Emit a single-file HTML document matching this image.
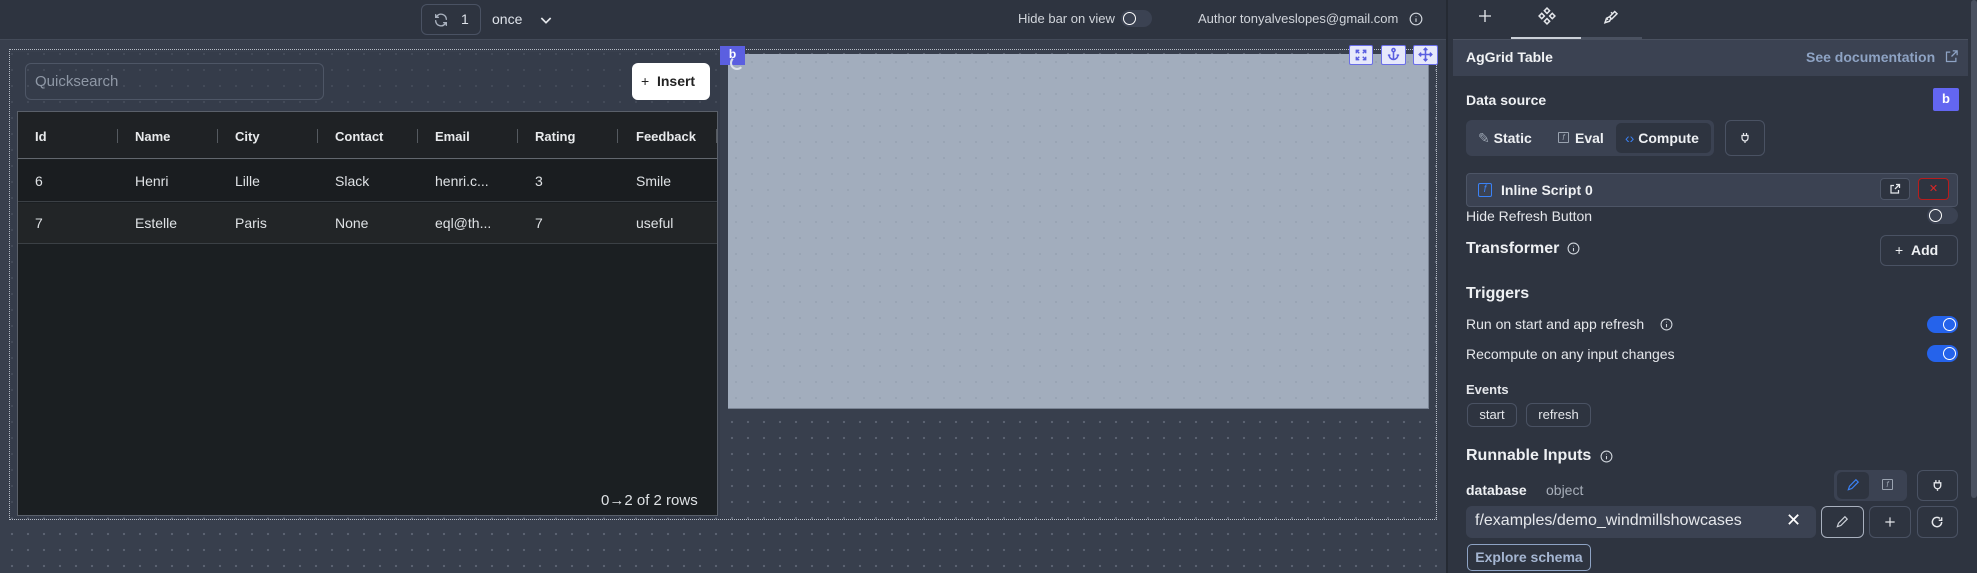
<!DOCTYPE html>
<html><head><meta charset="utf-8"><style>
*{box-sizing:border-box;margin:0;padding:0}
body{width:1977px;height:573px;overflow:hidden;background:#363d4b;font-family:"Liberation Sans",sans-serif;position:relative;color:#e5e7eb}
.a{position:absolute}
.canvas{left:0;top:40px;width:1446px;height:533px;background-color:#383f4d;background-image:radial-gradient(circle,#5c6372 1px,transparent 1.3px);background-size:16px 16px;background-position:4px 6px}
.top{left:0;top:0;width:1446px;height:40px;background:#2e3440;border-bottom:1px solid #434a58}
.panel{left:1446px;top:0;width:531px;height:573px;background:#2e3440;border-left:2px solid #252a33}
.t{font-size:14px;white-space:nowrap}
.btn{border:1px solid #4a5263;border-radius:6px}
.tog{width:31px;height:17px;border-radius:9px;background:#3b4252}
.tog::after{content:"";position:absolute;left:2px;top:2px;width:11px;height:11px;border:1.5px solid #fff;border-radius:50%}
.on{background:#2563eb}
.on::after{left:16px}
.hd{font-weight:bold;font-size:13px;color:#e8eaec}
.cell{font-size:14px;color:#dfe2e5}
.sep{width:1px;height:14px;background:#555a60;top:129px}
</style></head><body>
<div class="a canvas"></div>
<div class="a top"></div>
<!-- top bar -->
<div class="a btn" style="left:421px;top:4px;width:60px;height:31px;border-color:#4a5263"></div>
<svg class="a" style="left:433px;top:12px" width="16" height="16" viewBox="0 0 24 24" fill="none" stroke="#aab2bf" stroke-width="2" stroke-linecap="round"><path d="M20 11a8 8 0 0 0-14-5l-2 2M4 4v4h4M4 13a8 8 0 0 0 14 5l2-2M20 20v-4h-4"/></svg>
<div class="a t" style="left:461px;top:11px;color:#dfe3ea">1</div>
<div class="a t" style="left:492px;top:11px;color:#dfe3ea">once</div>
<svg class="a" style="left:538px;top:12px" width="16" height="16" viewBox="0 0 24 24" fill="none" stroke="#e5e7eb" stroke-width="2.5"><path d="M5 9l7 7 7-7"/></svg>
<div class="a t" style="left:1018px;top:11px;font-size:13px;color:#d1d5db">Hide bar on view</div>
<div class="a tog" style="left:1121px;top:10px;background:#3b4252"></div>
<div class="a t" style="left:1198px;top:11px;font-size:13px;color:#d1d5db">Author tonyalveslopes@gmail.com</div>
<svg class="a" style="left:1409px;top:12px" width="14" height="14" viewBox="0 0 24 24" fill="none" stroke="#cfd4db" stroke-width="2"><circle cx="12" cy="12" r="10"/><path d="M12 11v6M12 7v1"/></svg>
<!-- frame -->
<div class="a" style="left:9px;top:49px;width:1428px;height:471px;border:1px dotted #b8bec8"></div>
<div class="a" style="left:10px;top:52px;width:710px;height:466px;background:rgba(52,59,73,.6)"></div>
<div class="a" style="left:25px;top:63px;width:299px;height:37px;border:1px solid #4e5666;border-radius:6px"></div>
<div class="a t" style="left:35px;top:73px;font-size:15px;color:#8f98a6">Quicksearch</div>
<div class="a" style="left:632px;top:63px;width:78px;height:37px;background:#fff;border-radius:6px"></div>
<div class="a t" style="left:641px;top:73px;font-size:14px;color:#222">+&nbsp;&nbsp;<b>Insert</b></div>
<!-- table -->
<div class="a" style="left:17px;top:111px;width:701px;height:405px;background:#1b1f22;border:1px solid #5a606a"></div>
<div class="a" style="left:18px;top:112px;width:699px;height:47px;background:#1f2225;border-bottom:1px solid #62676e"></div>
<div class="a" style="left:18px;top:160px;width:699px;height:42px;background:#1a1d20;border-bottom:1px solid #3b4045"></div>
<div class="a" style="left:18px;top:203px;width:699px;height:41px;background:#222527;border-bottom:1px solid #3b4045"></div>
<div class="a hd" style="left:35px;top:129px">Id</div>
<div class="a hd" style="left:135px;top:129px">Name</div>
<div class="a hd" style="left:235px;top:129px">City</div>
<div class="a hd" style="left:335px;top:129px">Contact</div>
<div class="a hd" style="left:435px;top:129px">Email</div>
<div class="a hd" style="left:535px;top:129px">Rating</div>
<div class="a hd" style="left:636px;top:129px">Feedback</div>
<div class="a sep" style="left:117px"></div><div class="a sep" style="left:217px"></div><div class="a sep" style="left:317px"></div><div class="a sep" style="left:417px"></div><div class="a sep" style="left:517px"></div><div class="a sep" style="left:617px"></div><div class="a sep" style="left:716px"></div>
<div class="a cell" style="left:35px;top:173px">6</div><div class="a cell" style="left:135px;top:173px">Henri</div><div class="a cell" style="left:235px;top:173px">Lille</div><div class="a cell" style="left:335px;top:173px">Slack</div><div class="a cell" style="left:435px;top:173px">henri.c...</div><div class="a cell" style="left:535px;top:173px">3</div><div class="a cell" style="left:636px;top:173px">Smile</div>
<div class="a cell" style="left:35px;top:215px">7</div><div class="a cell" style="left:135px;top:215px">Estelle</div><div class="a cell" style="left:235px;top:215px">Paris</div><div class="a cell" style="left:335px;top:215px">None</div><div class="a cell" style="left:435px;top:215px">eql@th...</div><div class="a cell" style="left:535px;top:215px">7</div><div class="a cell" style="left:636px;top:215px">useful</div>
<div class="a t" style="left:601px;top:492px;font-size:15px;color:#dfe2e5">0→2 of 2 rows</div>
<!-- gray box -->
<div class="a" style="left:728px;top:54px;width:701px;height:355px;background-color:#a2adbd;background-image:radial-gradient(circle,#98a3b3 1px,transparent 1.3px);background-size:16px 16px;border-right:1px solid #7a8494;border-bottom:1px solid #7a8494"></div>
<div class="a" style="left:720px;top:46px;width:25px;height:19px;background:#5b5fe0;color:#fff;font-size:12px;font-weight:bold;text-align:center;line-height:17px">b</div>
<div class="a" style="left:730px;top:56px;width:14px;height:14px;border:2px solid #dde3ea;border-radius:50%;border-top-color:transparent;border-right-color:transparent"></div>
<div class="a" style="left:1349px;top:45px;width:24px;height:20px;background:#e6e8fb;border:1px solid #6a6ee8;border-radius:2px"></div>
<div class="a" style="left:1381px;top:45px;width:25px;height:20px;background:#e6e8fb;border:1px solid #6a6ee8;border-radius:2px"></div>
<div class="a" style="left:1413px;top:45px;width:25px;height:20px;background:#e6e8fb;border:1px solid #6a6ee8;border-radius:2px"></div>
<svg class="a" style="left:1354px;top:48px" width="14" height="14" viewBox="0 0 24 24" fill="none" stroke="#5a5ee0" stroke-width="2.5"><path d="M4 9V4h5M20 9V4h-5M4 15v5h5M20 15v5h-5M4 4l5 5M20 4l-5 5M4 20l5-5M20 20l-5-5"/></svg>
<svg class="a" style="left:1386px;top:47px" width="15" height="15" viewBox="0 0 24 24" fill="none" stroke="#5a5ee0" stroke-width="2.5"><circle cx="12" cy="5" r="2.5"/><path d="M12 8v13M5 13a7 7 0 0 0 14 0M3 13h4M17 13h4"/></svg>
<svg class="a" style="left:1418px;top:47px" width="15" height="15" viewBox="0 0 24 24" fill="none" stroke="#5a5ee0" stroke-width="2.5"><path d="M12 2v20M2 12h20M9 5l3-3 3 3M9 19l3 3 3-3M5 9l-3 3 3 3M19 9l3 3-3 3"/></svg>
<!-- panel -->
<div class="a panel"></div>
<svg class="a" style="left:1477px;top:8px" width="16" height="16" viewBox="0 0 24 24" fill="none" stroke="#e5e7eb" stroke-width="2"><path d="M12 3v18M3 12h18"/></svg>
<svg class="a" style="left:1538px;top:7px" width="18" height="18" viewBox="0 0 24 24" fill="none" stroke="#e5e7eb" stroke-width="2"><rect x="9.5" y="2.5" width="5" height="5" transform="rotate(45 12 5)"/><rect x="9.5" y="16.5" width="5" height="5" transform="rotate(45 12 19)"/><rect x="2.5" y="9.5" width="5" height="5" transform="rotate(45 5 12)"/><rect x="16.5" y="9.5" width="5" height="5" transform="rotate(45 19 12)"/></svg>
<svg class="a" style="left:1602px;top:7px" width="18" height="18" viewBox="0 0 24 24" fill="none" stroke="#e5e7eb" stroke-width="2"><path d="M10 13l7-7 3 3-7 7zM10 13l-4 2-2 6 6-2 2-4M14 9l-2-2M8 17l-2-2"/></svg>
<div class="a" style="left:1511px;top:37px;width:70px;height:2px;background:#cbd0d8"></div>
<div class="a" style="left:1581px;top:37px;width:61px;height:2px;background:#4a5160"></div>
<div class="a" style="left:1453px;top:39px;width:515px;height:37px;background:#3b4252;border-top:1px solid #4a5160"></div>
<div class="a t" style="left:1466px;top:49px;font-weight:bold;font-size:14px;color:#f1f3f5">AgGrid Table</div>
<div class="a t" style="left:1806px;top:49px;font-weight:bold;font-size:14px;color:#8ea3c4">See documentation</div>
<svg class="a" style="left:1944px;top:49px" width="15" height="15" viewBox="0 0 24 24" fill="none" stroke="#8ea3c4" stroke-width="2"><path d="M14 3h7v7M21 3l-9 9M19 14v6H4V5h6"/></svg>
<div class="a t" style="left:1466px;top:92px;font-weight:bold;color:#eef0f3">Data source</div>
<div class="a" style="left:1933px;top:88px;width:26px;height:23px;background:#6366f1;border-radius:2px;color:#fff;font-weight:bold;font-size:13px;text-align:center;line-height:22px">b</div>
<div class="a" style="left:1466px;top:120px;width:248px;height:36px;background:#3b4252;border-radius:6px"></div>
<div class="a" style="left:1616px;top:123px;width:95px;height:30px;background:#2e3440;border-radius:5px"></div>
<div class="a t" style="left:1478px;top:130px;color:#eef0f3"><span style="color:#9aa3b0">✎</span> <b>Static</b></div>
<div class="a" style="left:1558px;top:132px;width:11px;height:11px;border:1px solid #9aa3b0;border-radius:1px;font-size:8px;color:#9aa3b0;text-align:center;line-height:10px;font-style:italic">f</div>
<div class="a t" style="left:1575px;top:130px;font-weight:bold;color:#eef0f3">Eval</div>
<div class="a t" style="left:1625px;top:130px;color:#eef0f3"><span style="color:#3b82f6">‹›</span> <b>Compute</b></div>
<div class="a btn" style="left:1725px;top:120px;width:40px;height:36px"></div>
<svg class="a" style="left:1739px;top:132px" width="12" height="12" viewBox="0 0 24 24" fill="none" stroke="#e5e7eb" stroke-width="2.5"><path d="M9 2v5M15 2v5M6 7h12v5a6 6 0 0 1-12 0zM12 18v4"/></svg>
<div class="a" style="left:1466px;top:173px;width:492px;height:34px;background:#3b4252;border:1px solid #4d5566;border-radius:4px"></div>
<div class="a" style="left:1478px;top:183px;width:14px;height:14px;border:1.5px solid #3b82f6;border-radius:2px;color:#3b82f6;font-size:10px;text-align:center;line-height:11px;font-style:italic">f</div>
<div class="a t" style="left:1501px;top:182px;font-weight:bold;color:#eef0f3">Inline Script 0</div>
<div class="a" style="left:1880px;top:178px;width:30px;height:22px;background:#2e3440;border:1px solid #4d5566;border-radius:4px"></div>
<svg class="a" style="left:1889px;top:183px" width="12" height="12" viewBox="0 0 24 24" fill="none" stroke="#e5e7eb" stroke-width="2.5"><path d="M14 3h7v7M21 3l-9 9M19 14v6H4V5h6"/></svg>
<div class="a" style="left:1918px;top:178px;width:31px;height:22px;background:#2e3440;border:1px solid #b91c1c;border-radius:4px;color:#dc2626;font-size:11px;text-align:center;line-height:20px">✕</div>
<div class="a t" style="left:1466px;top:208px;color:#e5e7eb">Hide Refresh Button</div>
<div class="a tog" style="left:1927px;top:207px"></div>
<div class="a t" style="left:1466px;top:240px;font-weight:bold;font-size:16px;color:#eef0f3">Transformer</div>
<svg class="a" style="left:1567px;top:242px" width="13" height="13" viewBox="0 0 24 24" fill="none" stroke="#cfd4db" stroke-width="2"><circle cx="12" cy="12" r="10"/><path d="M12 11v6M12 7v1"/></svg>
<div class="a btn" style="left:1880px;top:235px;width:78px;height:31px"></div>
<div class="a t" style="left:1895px;top:242px;color:#eef0f3">+&nbsp;&nbsp;<b>Add</b></div>
<div class="a t" style="left:1466px;top:285px;font-weight:bold;font-size:16px;color:#eef0f3">Triggers</div>
<div class="a t" style="left:1466px;top:316px;color:#e5e7eb">Run on start and app refresh</div>
<svg class="a" style="left:1660px;top:318px" width="13" height="13" viewBox="0 0 24 24" fill="none" stroke="#cfd4db" stroke-width="2"><circle cx="12" cy="12" r="10"/><path d="M12 11v6M12 7v1"/></svg>
<div class="a tog on" style="left:1927px;top:316px"></div>
<div class="a t" style="left:1466px;top:346px;color:#e5e7eb">Recompute on any input changes</div>
<div class="a tog on" style="left:1927px;top:345px"></div>
<div class="a t" style="left:1466px;top:382px;font-weight:bold;font-size:13px;color:#e5e7eb">Events</div>
<div class="a btn" style="left:1467px;top:403px;width:50px;height:24px;font-size:13px;color:#e5e7eb;text-align:center;line-height:22px">start</div>
<div class="a btn" style="left:1526px;top:403px;width:65px;height:24px;font-size:13px;color:#e5e7eb;text-align:center;line-height:22px">refresh</div>
<div class="a t" style="left:1466px;top:447px;font-weight:bold;font-size:16px;color:#eef0f3">Runnable Inputs</div>
<svg class="a" style="left:1600px;top:450px" width="13" height="13" viewBox="0 0 24 24" fill="none" stroke="#cfd4db" stroke-width="2"><circle cx="12" cy="12" r="10"/><path d="M12 11v6M12 7v1"/></svg>
<div class="a t" style="left:1466px;top:482px;font-weight:bold;color:#eef0f3">database</div>
<div class="a t" style="left:1546px;top:482px;color:#a8afba">object</div>
<div class="a" style="left:1834px;top:470px;width:73px;height:31px;background:#3b4252;border-radius:6px"></div>
<div class="a" style="left:1837px;top:472px;width:32px;height:27px;background:#2e3440;border-radius:5px"></div>
<svg class="a" style="left:1846px;top:478px" width="14" height="14" viewBox="0 0 24 24" fill="none" stroke="#3b82f6" stroke-width="2"><path d="M4 20l2-6L17 3l4 4L10 18z"/></svg>
<div class="a" style="left:1882px;top:479px;width:11px;height:11px;border:1px solid #9aa3b0;border-radius:1px;font-size:8px;color:#9aa3b0;text-align:center;line-height:10px;font-style:italic">f</div>
<div class="a btn" style="left:1917px;top:470px;width:41px;height:31px"></div>
<svg class="a" style="left:1931px;top:479px" width="13" height="13" viewBox="0 0 24 24" fill="none" stroke="#e5e7eb" stroke-width="2.5"><path d="M9 2v5M15 2v5M6 7h12v5a6 6 0 0 1-12 0zM12 18v4"/></svg>
<div class="a" style="left:1466px;top:506px;width:350px;height:32px;background:#3b4252;border-radius:6px"></div>
<div class="a t" style="left:1475px;top:512px;font-size:16px;color:#e5e7eb">f/examples/demo_windmillshowcases</div>
<div class="a t" style="left:1786px;top:510px;font-size:18px;color:#fff">✕</div>
<div class="a btn" style="left:1821px;top:506px;width:43px;height:32px;border-color:#a9b1bf"></div>
<svg class="a" style="left:1835px;top:515px" width="14" height="14" viewBox="0 0 24 24" fill="none" stroke="#cfd4db" stroke-width="2"><path d="M4 20l2-6L17 3l4 4L10 18z"/></svg>
<div class="a btn" style="left:1869px;top:506px;width:42px;height:32px"></div>
<svg class="a" style="left:1883px;top:515px" width="14" height="14" viewBox="0 0 24 24" fill="none" stroke="#e5e7eb" stroke-width="2"><path d="M12 4v16M4 12h16"/></svg>
<div class="a btn" style="left:1917px;top:506px;width:41px;height:32px"></div>
<svg class="a" style="left:1930px;top:515px" width="14" height="14" viewBox="0 0 24 24" fill="none" stroke="#e5e7eb" stroke-width="2.5"><path d="M20 12a8 8 0 1 1-3-6.2M20 4v5h-5"/></svg>
<div class="a" style="left:1467px;top:544px;width:124px;height:27px;border:1px solid #8ea3c4;border-radius:5px;color:#a5b6d2;font-weight:bold;font-size:14px;text-align:center;line-height:25px">Explore schema</div>
<div class="a" style="left:1971px;top:0;width:6px;height:498px;background:#4a5160;border-radius:3px"></div>
</body></html>
